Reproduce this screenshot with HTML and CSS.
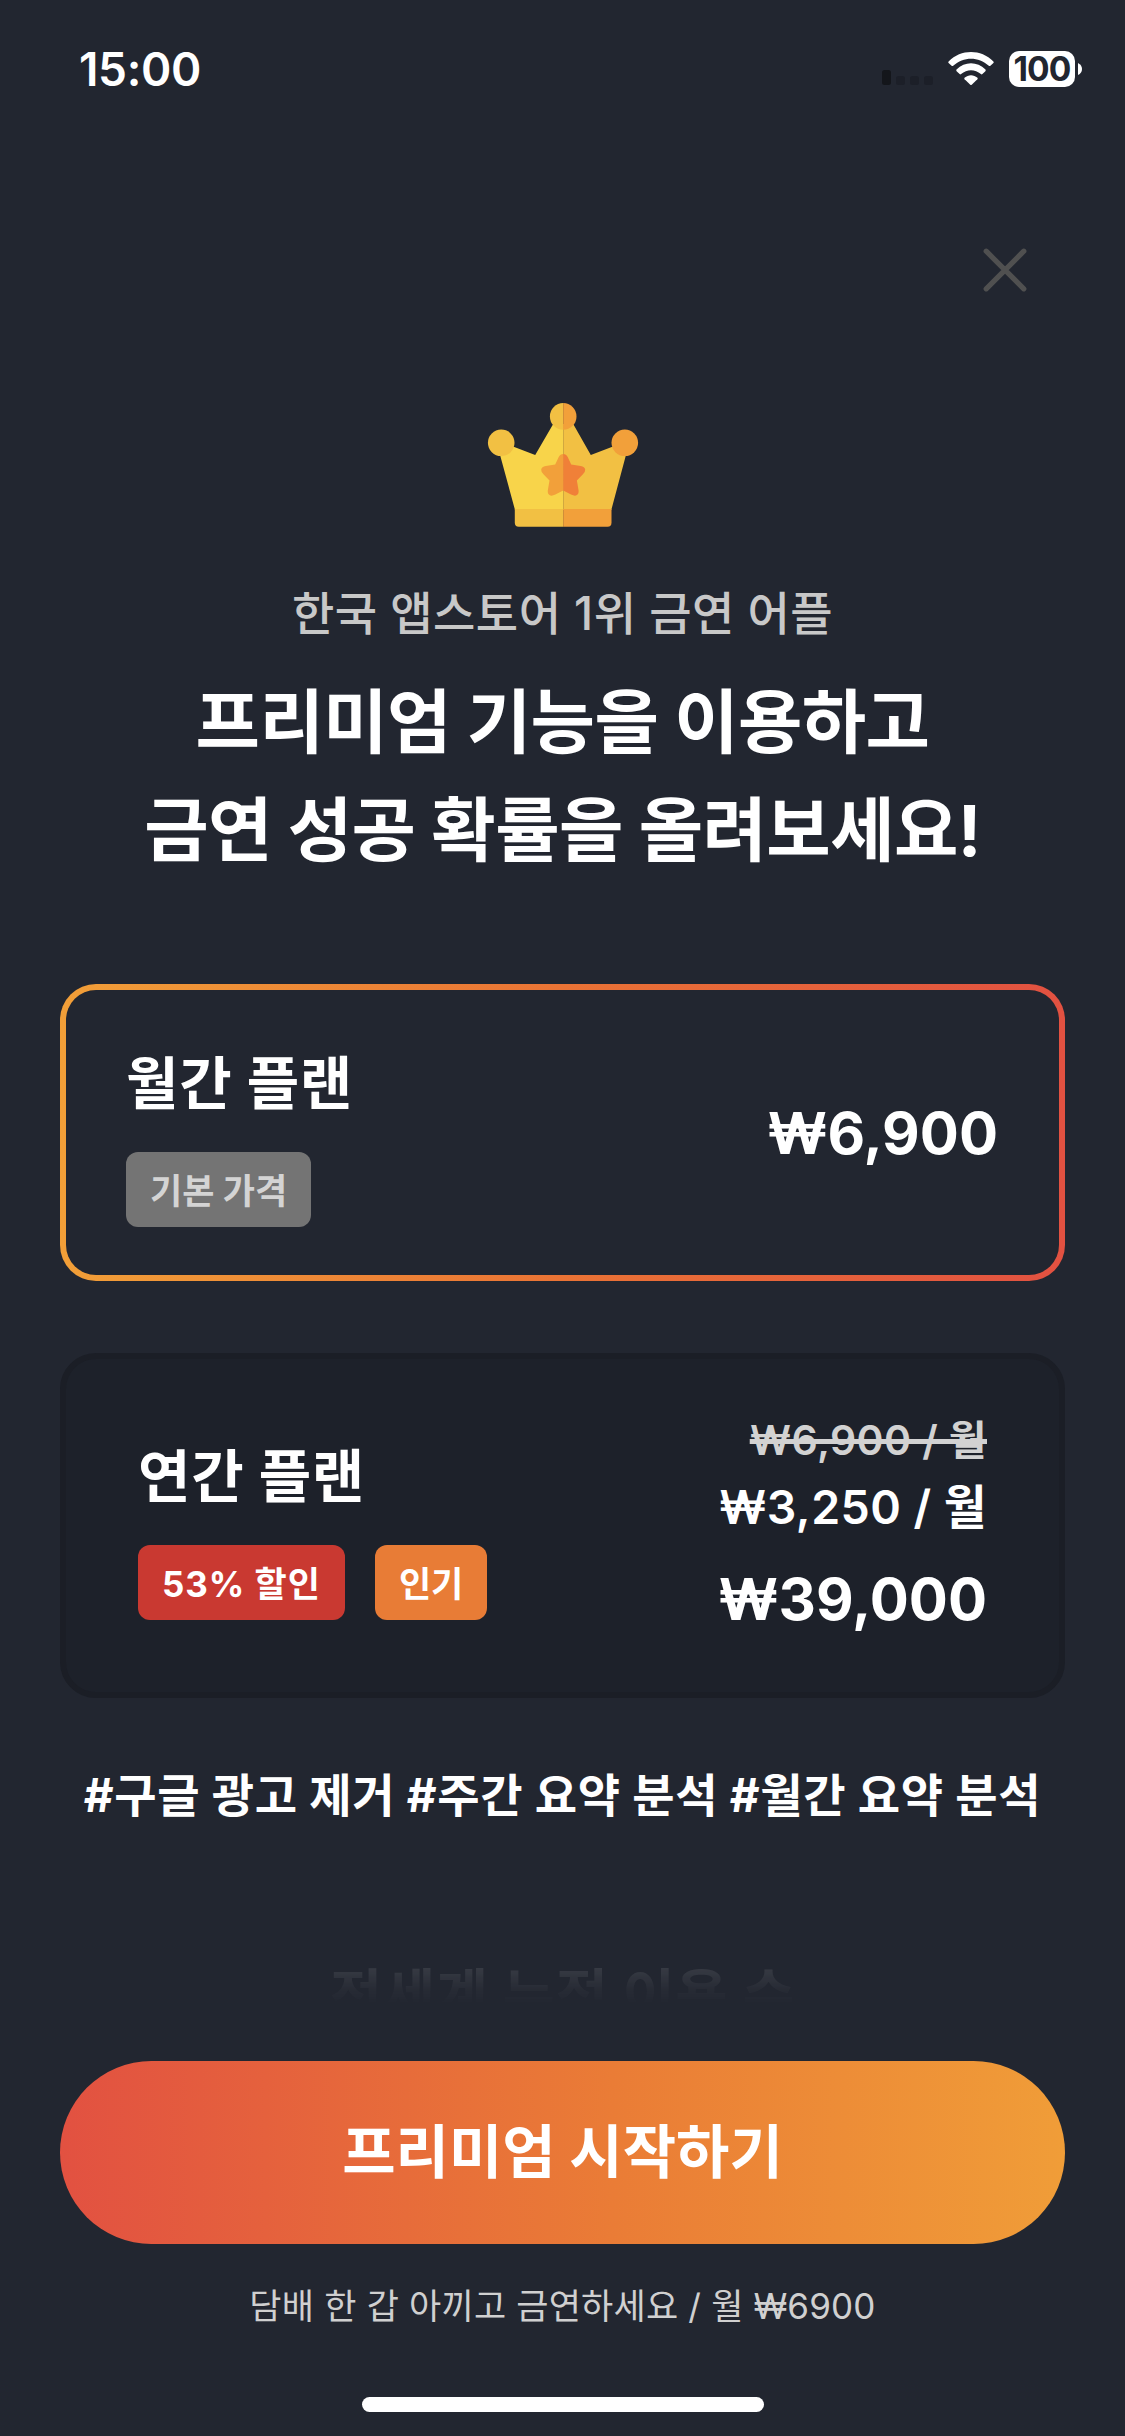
FILE: index.html
```html
<!DOCTYPE html>
<html lang="ko">
<head>
<meta charset="utf-8">
<title>프리미엄</title>
<link rel="stylesheet" href="styles.css">
</head>
<body>
<div class="screen">
  <header class="status">
    <span class="time">15:00</span>
    <div class="status-icons">
      <svg class="signal" width="52" height="36" viewBox="0 0 52 36"><rect x="0" y="19" width="9" height="15" rx="2.5" fill="#14161b"/><rect x="14" y="25" width="9" height="9" rx="2.5" fill="#1c1f28"/><rect x="28" y="25" width="9" height="9" rx="2.5" fill="#1c1f28"/><rect x="42" y="25" width="9" height="9" rx="2.5" fill="#1c1f28"/></svg>
      <svg class="wifi" width="46" height="36" viewBox="0 0 46 36" fill="#fff"><path d="M.6 10.4C13-2.100 33-2.100 45.400 10.400Q46 11.200 45.400 12L42.400 14.800Q41.600 15.400 40.800 14.700C30.500 5.300 15.500 5.300 5.200 14.700Q4.400 15.400 3.600 14.800L.6 12Q0 11.200.6 10.400Z"/><path d="M8.500 18.600C17 10.200 29 10.200 37.500 18.600Q38.100 19.400 37.400 20.200L34.400 23.100Q33.700 23.700 32.900 23.100C27 18 19 18 13.100 23.100Q12.300 23.700 11.600 23.100L8.600 20.200Q7.900 19.400 8.500 18.600Z"/><path d="M16.500 26.800C20.500 23.300 25.500 23.300 29.500 26.800Q30.100 27.500 29.400 28.300L23.700 33.800Q23 34.400 22.300 33.800L16.600 28.300Q15.900 27.500 16.500 26.800Z"/></svg>
      <div class="battery"><span class="battery-body">100</span><svg width="4" height="12" viewBox="0 0 4 12"><path d="M0 0Q4 2 4 6T0 12Z" fill="#fff"/></svg></div>
    </div>
  </header>
  <div class="close-row">
    <svg width="44" height="44" viewBox="0 0 44 44" stroke="#505050" stroke-width="5.200" stroke-linecap="round"><path d="M3.200 3.200 40.800 40.800M40.800 3.200 3.200 40.800"/></svg>
  </div>
  <section class="hero">
    <svg class="crown" width="152" height="126" viewBox="0 0 152 126">
      <path d="M12.500 50 26 43.400 48.200 52 66.200 21H76.200V107H28Z" fill="#f8d44a"/>
      <path d="M139.500 50 126 43.400 103.800 52 86.200 21H76.200V107H124.300Z" fill="#f2c043"/>
      <path d="M27.800 106H76.200V123.700H31.800Q27.800 123.700 27.800 119.700Z" fill="#f2c043"/>
      <path d="M76.200 106H124.500V119.700Q124.500 123.700 120.500 123.700H76.200Z" fill="#f2a03a"/>
      <circle cx="14.200" cy="39.800" r="13.300" fill="#f2c043"/>
      <circle cx="137.800" cy="39.800" r="13.300" fill="#f2a03a"/>
      <path d="M76.200.1A13.300 13.300 0 0 0 76.200 26.700Z" fill="#f2c043"/>
      <path d="M76.200.1A13.300 13.300 0 0 1 76.200 26.700Z" fill="#f2a03a"/>
      <path d="M76.200 51Q73.200 51 71.700 54L68.200 61.500 58.700 63Q54.700 63.500 54.200 66.500 53.900 69 56.700 71.500L62.500 77.500 60.800 87.500Q60.400 91.500 63.400 92.500 65.400 93 68.400 91.500L76.200 87.500Z" fill="#f2a03a"/>
      <path d="M76.200 51Q79.200 51 80.700 54L84.200 61.500 93.700 63Q97.700 63.500 98.200 66.500 98.500 69 95.700 71.500L89.900 77.500 91.600 87.500Q92 91.500 89 92.500 87 93 84 91.500L76.200 87.500Z" fill="#f08038"/>
    </svg>
    <p class="eyebrow">한국 앱스토어 1위 금연 어플</p>
    <h1 class="headline">프리미엄 기능을 이용하고<br>금연 성공 확률을 올려보세요!</h1>
  </section>
  <section class="plan plan-selected">
    <div class="plan-info">
      <h2 class="plan-name">월간 플랜</h2>
      <div class="badges"><span class="badge badge-gray">기본 가격</span></div>
    </div>
    <p class="price">₩6,900</p>
  </section>
  <section class="plan plan-yearly">
    <div class="plan-info">
      <h2 class="plan-name">연간 플랜</h2>
      <div class="badges"><span class="badge badge-red">53% 할인</span><span class="badge badge-orange">인기</span></div>
    </div>
    <div class="prices">
      <p class="old">₩6,900 / 월</p>
      <p class="monthly">₩3,250 / 월</p>
      <p class="price">₩39,000</p>
    </div>
  </section>
  <p class="tags">#구글 광고 제거 #주간 요약 분석 #월간 요약 분석</p>
  <p class="peek">전세계 누적 이용 수</p>
  <footer class="bottom">
    <div class="cta">프리미엄 시작하기</div>
    <p class="note">담배 한 갑 아끼고 금연하세요 / 월 ₩6900</p>
    <div class="home"></div>
  </footer>
</div>
</body>
</html>
```
FILE: styles.css
```css
* { box-sizing: border-box; }
body { margin: 0; background: #222630; color: #fff; font-family: Inter, "Noto Sans CJK KR", sans-serif; }
h1, h2, p { margin: 0; }
svg { display: block; flex: none; }
.screen { width: 1125px; height: 2436px; overflow: hidden; display: flex; flex-direction: column; white-space: nowrap; }
.status { height: 138px; padding: 51px 43px 0 79px; display: flex; justify-content: space-between; align-items: flex-start; }
.time { font-size: 46px; line-height: 36px; font-weight: 600; letter-spacing: -0.35px; }
.status-icons { display: flex; align-items: flex-start; }
.wifi { margin-left: 14px; }
.battery { display: flex; align-items: center; gap: 3px; margin-left: 15px; }
.battery-body { width: 66px; height: 36px; border-radius: 10px; background: #fff; color: #222630; font-size: 33.5px; line-height: 36px; font-weight: 700; text-align: center; letter-spacing: -0.8px; }
.close-row { height: 265px; padding: 110px 98px 0 0; display: flex; justify-content: flex-end; }
.hero { height: 581px; display: flex; flex-direction: column; align-items: center; }
.crown { margin-bottom: 51px; }
.eyebrow { font-size: 46px; line-height: 66px; font-weight: 500; letter-spacing: 0.45px; color: #c8c8c8; }
.headline { margin-top: 23px; font-size: 70px; line-height: 108px; font-weight: 700; letter-spacing: -0.6px; text-align: center; }
.plan { margin: 0 60px; display: flex; justify-content: space-between; align-items: center; border: 6px solid transparent; border-radius: 36px; }
.plan-selected { height: 297px; padding: 0 61px 0 60px; background: linear-gradient(#222630, #222630) padding-box, linear-gradient(90deg, #f29f38, #ea7335 50%, #e25141) border-box; }
.plan-yearly { height: 345px; margin-top: 72px; padding: 0 72px; background: #1d212a; border-color: #1b1e26; }
.plan-info { padding-top: 10px; }
.plan-name { font-size: 57px; line-height: 72px; font-weight: 700; letter-spacing: 0.75px; }
.badges { display: flex; gap: 30px; margin-top: 32px; }
.badge { height: 75px; padding: 0 24px; border-radius: 12px; font-size: 35px; line-height: 78px; font-weight: 700; }
.badge-gray { background: #747474; color: #d4d4d4; }
.badge-red { background: #c93931; letter-spacing: 0.95px; }
.badge-orange { background: #e87c36; }
.price { font-size: 58px; line-height: 72px; font-weight: 700; }
.prices { display: flex; flex-direction: column; align-items: flex-end; margin-bottom: 6px; }
.old { font-size: 41px; line-height: 60px; font-weight: 600; letter-spacing: 0.4px; color: #d2d2d2; text-decoration: line-through; text-decoration-thickness: 4.5px; }
.monthly { font-size: 46.5px; line-height: 74px; font-weight: 600; letter-spacing: 0.45px; margin-bottom: 19px; }
.tags { margin-top: 61px; font-size: 46px; line-height: 72px; font-weight: 700; letter-spacing: 0.65px; text-align: center; }
.peek { margin-top: 125px; font-size: 57px; line-height: 80px; font-weight: 700; letter-spacing: 0.5px; text-align: center; -webkit-mask-image: linear-gradient(rgba(0,0,0,0.095) 12px, rgba(0,0,0,0.025) 34px, transparent 50px); mask-image: linear-gradient(rgba(0,0,0,0.095) 12px, rgba(0,0,0,0.025) 34px, transparent 50px); }
.bottom { margin-top: auto; height: 375px; padding: 0 60px; display: flex; flex-direction: column; align-items: center; }
.cta { width: 1005px; height: 183px; border-radius: 92px; background: linear-gradient(90deg, #e25141, #ea7c36 55%, #f09d38); font-size: 58px; line-height: 183px; font-weight: 700; letter-spacing: 0; text-align: center; }
.note { margin-top: 37px; font-size: 35px; line-height: 50px; letter-spacing: 0.2px; color: #d0d0d0; }
.home { width: 402px; height: 15px; border-radius: 8px; background: #fff; margin-top: auto; margin-bottom: 24px; }
```
